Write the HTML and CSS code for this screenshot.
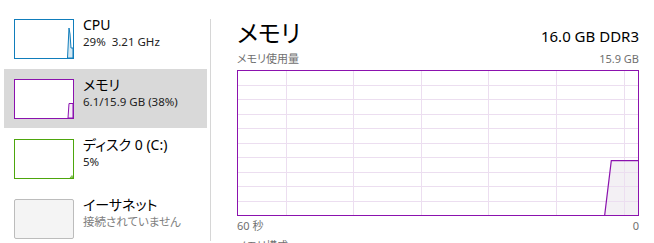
FILE: index.html
```html
<!DOCTYPE html>
<html lang="ja">
<head>
<meta charset="utf-8">
<title>メモリ</title>
<link rel="stylesheet" href="styles.css">
</head>
<body>
<div class="app">
  <nav class="side">
    <div class="item">
      <div class="thumb cpu">
        <svg width="58" height="38" viewBox="0 0 58 38"><polygon points="52.5,38 54,8 55,14 56,28 58,28 58,38" fill="rgba(17,125,187,0.18)" stroke="#117dbb" stroke-width="1"/></svg>
      </div>
      <div class="info"><div class="name">CPU</div><div class="sub">29%&nbsp; 3.21 GHz</div></div>
    </div>
    <div class="item selected">
      <div class="thumb mem">
        <svg width="58" height="38" viewBox="0 0 58 38"><polygon points="53,38 54,23.5 58,23.5 58,38" fill="rgba(139,18,174,0.08)" stroke="#8b12ae" stroke-width="1"/></svg>
      </div>
      <div class="info"><div class="name">メモリ</div><div class="sub">6.1/15.9 GB (38%)</div></div>
    </div>
    <div class="item">
      <div class="thumb disk">
        <svg width="58" height="38" viewBox="0 0 58 38"><polygon points="55,38 57,35.5 58,38" fill="rgba(77,166,12,0.5)" stroke="#4da60c" stroke-width="0.6"/></svg>
      </div>
      <div class="info"><div class="name">ディスク 0 (C:)</div><div class="sub">5%</div></div>
    </div>
    <div class="item">
      <div class="thumb net"></div>
      <div class="info"><div class="name">イーサネット</div><div class="sub muted">接続されていません</div></div>
    </div>
  </nav>
  <div class="divider"></div>
  <main class="main">
    <div class="head">
      <h1 class="title">メモリ</h1>
      <div class="spec">16.0 GB DDR3</div>
    </div>
    <div class="labels top"><span>メモリ使用量</span><span>15.9 GB</span></div>
    <div class="chart">
      <svg width="400" height="144" viewBox="0 0 400 144">
        <polygon points="366.7,144 373.3,89.7 400,89.7 400,144" fill="#f3f0f4"/>
        <g stroke="#ecdef0" stroke-width="1">
          <line x1="48.5" y1="0" x2="48.5" y2="144"/>
          <line x1="115.5" y1="0" x2="115.5" y2="144"/>
          <line x1="183.5" y1="0" x2="183.5" y2="144"/>
          <line x1="250.5" y1="0" x2="250.5" y2="144"/>
          <line x1="318.5" y1="0" x2="318.5" y2="144"/>
          <line x1="386.5" y1="0" x2="386.5" y2="144"/>
          <line x1="0" y1="14.5" x2="400" y2="14.5"/>
          <line x1="0" y1="28.5" x2="400" y2="28.5"/>
          <line x1="0" y1="43.5" x2="400" y2="43.5"/>
          <line x1="0" y1="57.5" x2="400" y2="57.5"/>
          <line x1="0" y1="72.5" x2="400" y2="72.5"/>
          <line x1="0" y1="86.5" x2="400" y2="86.5"/>
          <line x1="0" y1="101.5" x2="400" y2="101.5"/>
          <line x1="0" y1="115.5" x2="400" y2="115.5"/>
          <line x1="0" y1="130.5" x2="400" y2="130.5"/>
        </g>
        <polyline points="366.7,144 373.3,89.7 400,89.7" fill="none" stroke="#8b12ae" stroke-width="1.2"/>
      </svg>
    </div>
    <div class="labels bottom"><span>60 秒</span><span>0</span></div>
    <div class="section">メモリ構成</div>
  </main>
</div>
</body>
</html>
```
FILE: styles.css
```css
html, body {
  margin: 0;
  padding: 0;
  background: #fff;
}
body {
  font-family: "Noto Sans", "Noto Sans CJK JP", sans-serif;
  font-feature-settings: "palt";
  color: #000;
  width: 654px;
  height: 243px;
  overflow: hidden;
}
.app {
  display: flex;
  height: 243px;
}
.side {
  width: 204px;
  padding: 9px 0 0 4px;
  margin-right: 3px;
  display: flex;
  flex-direction: column;
  gap: 1px;
}
.item {
  height: 59px;
  display: flex;
  align-items: flex-start;
  box-sizing: border-box;
  padding: 10px 0 0 10px;
  gap: 9px;
  flex-shrink: 0;
}
.item.selected {
  background: #d9d9d9;
}
.thumb {
  width: 58px;
  height: 38px;
  border: 1px solid;
  background: #fff;
  flex-shrink: 0;
}
.thumb svg { display: block; }
.thumb.cpu { border-color: #117dbb; }
.thumb.mem { border-color: #8b12ae; }
.thumb.disk { border-color: #4da60c; }
.thumb.net {
  border-color: #bcbcbc;
  background: #f4f4f4;
  border-radius: 2px;
}
.info {
  margin-top: -3px;
}
.name {
  font-size: 14px;
  line-height: 18px;
}
.sub {
  font-size: 11.5px;
  line-height: 16px;
  color: #222;
}
.sub.muted { color: #808080; }
.divider {
  width: 1px;
  background: #d6d6d6;
  margin-top: 19px;
  margin-bottom: 2px;
}
.main {
  flex: 1;
  padding: 0 15px 0 26px;
  display: flex;
  flex-direction: column;
}
.head {
  display: flex;
  justify-content: space-between;
  align-items: baseline;
  margin-top: 16px;
}
.title {
  margin: 0;
  font-weight: normal;
  font-size: 24px;
  line-height: 32px;
  font-family: "Noto Sans CJK JP", sans-serif;
}
.spec {
  font-size: 15px;
}
.labels {
  display: flex;
  justify-content: space-between;
  color: #707070;
  font-size: 11px;
  line-height: 14px;
}
.labels.top { margin-top: 4px; }
.labels.bottom { margin-top: 3px; }
.chart {
  width: 400px;
  height: 144px;
  border: 1px solid #8b12ae;
  margin-top: 4px;
}
.chart svg { display: block; }
.section {
  font-size: 11px;
  color: #707070;
  margin-top: 4px;
}
```
